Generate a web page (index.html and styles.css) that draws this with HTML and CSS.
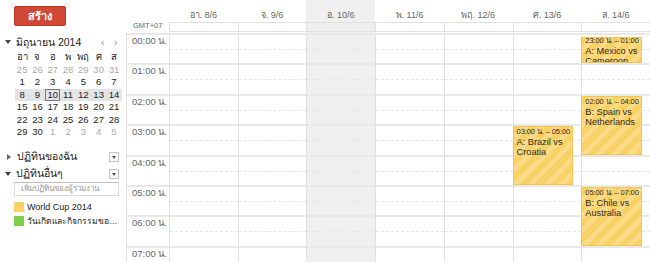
FILE: index.html
```html
<!DOCTYPE html>
<html lang="th">
<head>
<meta charset="utf-8">
<link rel="stylesheet" href="styles.css">
</head>
<body>
<div class="app">
  <aside class="sidebar">
    <button class="create">สร้าง</button>
    <div class="mc-head">
      <span class="tri-down"></span>
      <span class="mc-title">มิถุนายน 2014</span>
      <span class="mc-nav">‹</span>
      <span class="mc-nav">›</span>
    </div>
    <div class="mc-grid">
      <span class="dn">อา</span><span class="dn">จ</span><span class="dn">อ</span><span class="dn">พ</span><span class="dn">พฤ</span><span class="dn">ศ</span><span class="dn">ส</span>
      <span class="o">25</span><span class="o">26</span><span class="o">27</span><span class="o">28</span><span class="o">29</span><span class="o">30</span><span class="o">31</span>
      <span>1</span><span>2</span><span>3</span><span>4</span><span>5</span><span>6</span><span>7</span>
      <span class="w">8</span><span class="w">9</span><span class="w today">10</span><span class="w">11</span><span class="w">12</span><span class="w">13</span><span class="w">14</span>
      <span>15</span><span>16</span><span>17</span><span>18</span><span>19</span><span>20</span><span>21</span>
      <span>22</span><span>23</span><span>24</span><span>25</span><span>26</span><span>27</span><span>28</span>
      <span>29</span><span>30</span><span class="o">1</span><span class="o">2</span><span class="o">3</span><span class="o">4</span><span class="o">5</span>
    </div>
    <div class="sec first">
      <span class="tri-right"></span>
      <span class="sec-title">ปฏิทินของฉัน</span>
      <span class="dd"></span>
    </div>
    <div class="sec">
      <span class="tri-down"></span>
      <span class="sec-title">ปฏิทินอื่นๆ</span>
      <span class="dd"></span>
    </div>
    <div class="add">เพิ่มปฏิทินของผู้ร่วมงาน</div>
    <div class="cal first-cal"><span class="sq yellow"></span><span class="cal-name">World Cup 2014</span></div>
    <div class="cal"><span class="sq green"></span><span class="cal-name thai">วันเกิดและกิจกรรมของที่ติดต่อ</span></div>
  </aside>

  <main class="grid">
    <div class="gutter">
      <div class="head"></div>
      <div class="tz">GMT+07</div>
      <div class="body">
        <div class="tl">00:00 น.</div>
        <div class="tl">01:00 น.</div>
        <div class="tl">02:00 น.</div>
        <div class="tl">03:00 น.</div>
        <div class="tl">04:00 น.</div>
        <div class="tl">05:00 น.</div>
        <div class="tl">06:00 น.</div>
        <div class="tl">07:00 น.</div>
      </div>
    </div>

    <div class="day">
      <div class="head">อา. 8/6</div><div class="allday"></div>
      <div class="body"><div class="h"></div><div class="h"></div><div class="h"></div><div class="h"></div><div class="h"></div><div class="h"></div><div class="h"></div><div class="h"></div></div>
    </div>
    <div class="day">
      <div class="head">จ. 9/6</div><div class="allday"></div>
      <div class="body"><div class="h"></div><div class="h"></div><div class="h"></div><div class="h"></div><div class="h"></div><div class="h"></div><div class="h"></div><div class="h"></div></div>
    </div>
    <div class="day is-today">
      <div class="head">อ. 10/6</div><div class="allday"></div>
      <div class="body"><div class="h"></div><div class="h"></div><div class="h"></div><div class="h"></div><div class="h"></div><div class="h"></div><div class="h"></div><div class="h"></div></div>
    </div>
    <div class="day">
      <div class="head">พ. 11/6</div><div class="allday"></div>
      <div class="body"><div class="h"></div><div class="h"></div><div class="h"></div><div class="h"></div><div class="h"></div><div class="h"></div><div class="h"></div><div class="h"></div></div>
    </div>
    <div class="day">
      <div class="head">พฤ. 12/6</div><div class="allday"></div>
      <div class="body"><div class="h"></div><div class="h"></div><div class="h"></div><div class="h"></div><div class="h"></div><div class="h"></div><div class="h"></div><div class="h"></div></div>
    </div>
    <div class="day">
      <div class="head">ศ. 13/6</div><div class="allday"></div>
      <div class="body"><div class="h"></div><div class="h"></div><div class="h"></div><div class="h"></div><div class="h"></div><div class="h"></div><div class="h"></div><div class="h"></div>
        <div class="ev" style="top: 92.5px; height: 59px;"><div class="ev-time">03:00 น. – 05:00</div><div class="ev-title">A: Brazil vs Croatia</div></div>
      </div>
    </div>
    <div class="day">
      <div class="head">ส. 14/6</div><div class="allday"></div>
      <div class="body"><div class="h"></div><div class="h"></div><div class="h"></div><div class="h"></div><div class="h"></div><div class="h"></div><div class="h"></div><div class="h"></div>
        <div class="ev cont" style="top: 4px; height: 26px;"><div class="ev-time">23:00 น. – 01:00</div><div class="ev-title">A: Mexico vs Cameroon</div></div>
        <div class="ev" style="top: 62.5px; height: 59px;"><div class="ev-time">02:00 น. – 04:00</div><div class="ev-title">B: Spain vs Netherlands</div></div>
        <div class="ev" style="top: 153.5px; height: 59px;"><div class="ev-time">05:00 น. – 07:00</div><div class="ev-title">B: Chile vs Australia</div></div>
      </div>
    </div>
  </main>
</div>
</body>
</html>
```

FILE: styles.css
```css
* { box-sizing: border-box; }

html, body {
  margin: 0;
  padding: 0;
  background: #fff;
}

body {
  width: 650px;
  height: 262px;
  overflow: hidden;
  font-family: "Liberation Sans", Arial, "Noto Sans", sans-serif;
  color: #222;
}

.app {
  display: flex;
  height: 262px;
  overflow: hidden;
}

/* ---------- sidebar ---------- */
.sidebar {
  width: 126px;
  flex: none;
  display: flex;
  flex-direction: column;
}

.create {
  margin: 6px 0 0 14px;
  width: 52px;
  height: 20px;
  padding: 0;
  border: 1px solid #c53727;
  border-radius: 2px;
  background: #d14836;
  color: #fff;
  font-family: inherit;
  font-size: 11px;
  font-weight: bold;
  line-height: 18px;
}

.mc-head {
  display: flex;
  align-items: center;
  height: 14px;
  margin-top: 9px;
  padding-left: 5px;
}

.tri-down {
  width: 0;
  height: 0;
  border-left: 3px solid transparent;
  border-right: 3px solid transparent;
  border-top: 4px solid #444;
  margin-right: 5px;
}

.tri-right {
  width: 0;
  height: 0;
  border-top: 3px solid transparent;
  border-bottom: 3px solid transparent;
  border-left: 4px solid #666;
  margin: 0 6px 0 1px;
}

.mc-title {
  font-size: 10.5px;
  color: #222;
  flex: 1;
}

.mc-nav {
  font-size: 11px;
  color: #999;
  width: 13px;
  text-align: center;
}
.mc-nav:last-child { margin-right: 4px; }

.mc-grid {
  display: grid;
  grid-template-columns: repeat(7, 15.3px);
  grid-auto-rows: 12.5px;
  margin: 2px 0 0 14.5px;
  font-size: 9.5px;
  line-height: 12.5px;
  text-align: center;
  color: #222;
}

.mc-grid .dn { color: #222; }
.mc-grid .o { color: #aaa; }
.mc-grid .w { background: #e4e4e4; }
.mc-grid .today { box-shadow: inset 0 0 0 1px #777; }

.sec {
  display: flex;
  align-items: center;
  height: 14px;
  padding-left: 6px;
  margin-top: 3px;
}
.sec.first { margin-top: 11px; }
.sec .tri-down { margin-right: 5px; margin-left: -1px; }

.sec-title {
  flex: 1;
  font-size: 10.5px;
  color: #222;
}

.dd {
  width: 10px;
  height: 10px;
  margin-right: 7px;
  border: 1px solid #c6c6c6;
  background: #f8f8f8;
  position: relative;
}
.dd::after {
  content: "";
  position: absolute;
  left: 2px;
  top: 3px;
  border-left: 2px solid transparent;
  border-right: 2px solid transparent;
  border-top: 3px solid #555;
}

.add {
  margin: 1px 0 0 14px;
  width: 105px;
  height: 14px;
  border: 1px solid #d9d9d9;
  border-top-color: #c0c0c0;
  font-size: 8px;
  line-height: 12px;
  color: #999;
  padding-left: 6px;
  white-space: nowrap;
  overflow: hidden;
}

.cal {
  display: flex;
  align-items: center;
  height: 14px;
  margin-left: 14px;
  width: 107px;
}
.cal.first-cal { margin-top: 4px; }

.sq {
  width: 10px;
  height: 10px;
  flex: none;
  margin-right: 3px;
}
.sq.yellow { background: #fad165; }
.sq.green { background: #7bd148; }

.cal-name {
  font-size: 9px;
  color: #222;
  white-space: nowrap;
  overflow: hidden;
  text-overflow: ellipsis;
}
.cal-name.thai { font-size: 8.5px; }

/* ---------- week grid ---------- */
.grid {
  flex: 1;
  display: flex;
  height: 262px;
}

.gutter {
  width: 43px;
  flex: none;
  display: flex;
  flex-direction: column;
}
.gutter .head { height: 21px; flex: none; }
.tz {
  height: 12px;
  flex: none;
  font-size: 7.5px;
  line-height: 9px;
  color: #666;
  padding-left: 7px;
  white-space: nowrap;
}

.body {
  flex: 1;
  position: relative;
}

.gutter .body { border-left: 1px solid #e0e0e0; }

.tl {
  height: 30.4px;
  border-top: 2px solid #e8e8e8;
  font-size: 9.5px;
  color: #666;
  text-align: right;
  padding: 0 2px 0 0;
  line-height: 11px;
  white-space: nowrap;
}

.day {
  flex: 1;
  min-width: 0;
  display: flex;
  flex-direction: column;
  position: relative;
}

.day .head {
  height: 17px;
  margin-top: 5px;
  flex: none;
  font-size: 9px;
  color: #666;
  text-align: center;
  line-height: 20px;
  white-space: nowrap;
}

.day .allday {
  height: 10px;
  flex: none;
  border-top: 1px solid #e0e0e0;
  border-bottom: 1px solid #e0e0e0;
  border-left: 1px solid #e0e0e0;
  margin-bottom: 1px;
  background: #fff;
}

.day .body {
  border-left: 1px solid #e0e0e0;
}

.is-today { background: #efefef; }
.is-today .allday { background: transparent; }

.h {
  height: 30.4px;
  border-top: 2px solid #e8e8e8;
  position: relative;
}
.h::after {
  content: "";
  position: absolute;
  left: 0;
  right: 0;
  top: 14px;
  border-top: 1px dashed #e6e6e6;
}

.ev {
  position: absolute;
  left: -1px;
  right: 8px;
  overflow: hidden;
  border: 1px solid #f2c655;
  background-color: #fad165;
  background-image: repeating-linear-gradient(135deg,
      rgba(255,255,255,0) 0px,
      rgba(255,255,255,0) 6px,
      rgba(255,255,255,0.22) 6px,
      rgba(255,255,255,0.22) 11px);
  color: #2a2a2a;
  padding: 0 0 0 3px;
}
.ev.cont .ev-time { margin-top: -2px; }

.ev-time {
  font-size: 7.5px;
  letter-spacing: -0.1px;
  line-height: 10px;
  white-space: nowrap;
}

.ev-title {
  font-size: 9.2px;
  line-height: 10px;
}
```
